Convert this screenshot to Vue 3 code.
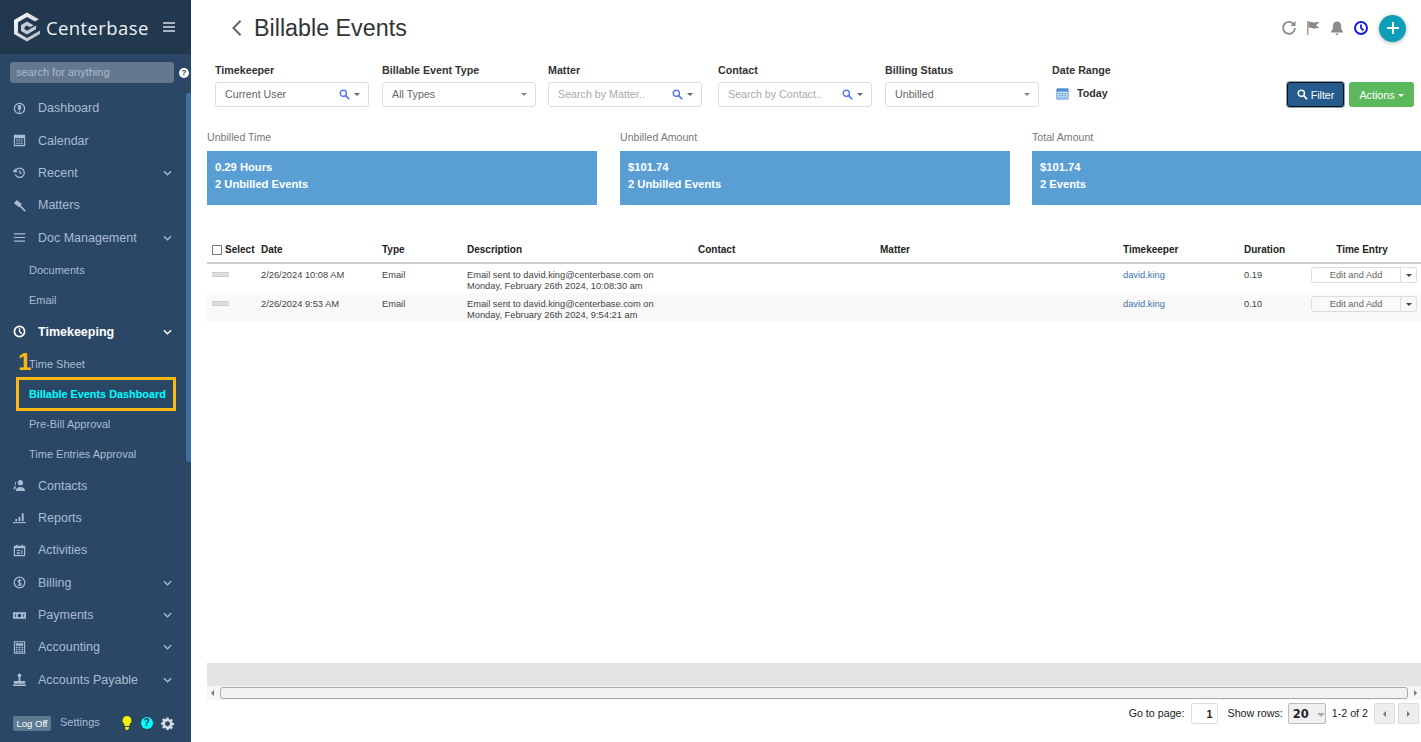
<template>
  <div class="app">
    <aside class="sidebar">
      <div class="brand">
        <svg class="logo" viewBox="2 1 26 30">
          <defs>
            <linearGradient id="hex" x1="0" y1="0" x2="1" y2="1">
              <stop offset="0" stop-color="#ffffff" />
              <stop offset="1" stop-color="#aeb8c2" />
            </linearGradient>
          </defs>
          <path d="M15 1.500 2 9v14l13 7.500L28 23v-3.500l-13 7.500-9-5.200V11.200L15 6l8 4.600 4-2.400z" fill="url(#hex)" />
          <path d="M15 10.500 9 14v6l6 3.500 9-5.200V14.500l-9 5.200-2.500-1.500V16l2.500-1.500 3 1.700 3.500-2z" fill="#c3ccd4" />
        </svg>
        <span class="brand-name">Centerbase</span>
        <svg class="burger" viewBox="0 0 14 12"><path d="M1 2h12M1 6h12M1 10h12" stroke="#d5dde5" stroke-width="1.600" /></svg>
      </div>
      <div class="search-row">
        <div class="search">search for anything</div>
        <span class="search-help">?</span>
      </div>
      <div class="scroll-thumb"></div>
      <nav class="nav">
        <template v-for="item in nav" :key="item.label">
          <div class="nav-item" :class="{ active: item.active }">
            <svg class="nav-icon" viewBox="0 0 14 14" v-html="icons[item.icon]"></svg>
            <span>{{ item.label }}</span>
            <svg v-if="item.arrow" class="chev" viewBox="0 0 10 6"><path d="M1 1l4 4 4-4" fill="none" stroke="currentColor" stroke-width="1.500" /></svg>
          </div>
          <div v-if="item.children" class="sub">
            <div v-for="c in item.children" :key="c.label" class="sub-item" :class="{ current: c.current }">
              <span v-if="c.mark" class="mark">1</span>
              {{ c.label }}
            </div>
          </div>
        </template>
      </nav>
      <div class="side-foot">
        <span class="logoff">Log Off</span>
        <span class="settings">Settings</span>
        <svg class="bulb" viewBox="0 0 10 14"><path d="M5 0a4.500 4.500 0 0 0-2.500 8.200V10h5V8.200A4.500 4.500 0 0 0 5 0zM3 11h4v1.200L5.800 14H4.200L3 12.200z" fill="#f4f000" /></svg>
        <span class="help">?</span>
        <svg class="gear" viewBox="0 0 24 24"><path fill="#d3dbe3" fill-rule="evenodd" d="M10 1h4l.6 3.200 1.900.8 2.700-1.800 2.800 2.800-1.800 2.700.8 1.900L24 11.200v3.600l-3 .6-.8 1.900 1.800 2.700-2.800 2.800-2.700-1.800-1.900.8L14 24h-4l-.6-3.200-1.900-.8-2.700 1.800L2 19l1.800-2.700-.8-1.900L0 13.800v-3.600l3-.6.800-1.900L2 5l2.800-2.800 2.700 1.800 1.900-.8zM12 8a4.500 4.500 0 1 0 0 9 4.500 4.500 0 0 0 0-9z" /></svg>
      </div>
    </aside>

    <main class="main">
      <header class="topbar">
        <svg class="back" viewBox="0 0 12 20"><path d="M10 2 2 10l8 8" fill="none" stroke="#666" stroke-width="2.200" /></svg>
        <h1>Billable Events</h1>
        <div class="top-icons">
          <svg viewBox="0 0 16 16" width="16" height="16"><path d="M13 4.500A6 6 0 1 0 14 8" fill="none" stroke="#8a8a8a" stroke-width="1.800" /><path d="M14.500 1v5h-5z" fill="#8a8a8a" /></svg>
          <svg viewBox="0 0 16 16" width="16" height="16"><path d="M2 1h1.500v14H2z" fill="#b39b86" /><path d="M3.500 1.500c3 0 4 1 5.500 1 1.500 0 3-.5 5.500-.5L11 5.500l3.500 2.500c-2.500 0-4 .5-5.500.5-1.500 0-2.500-1-5.500-1z" fill="#8a8a8a" /></svg>
          <svg viewBox="0 0 16 16" width="16" height="16"><path d="M8 1.500c-2.800 0-4 2-4 4.500 0 3-1 4.500-2 5.500v1h12v-1c-1-1-2-2.500-2-5.500 0-2.500-1.200-4.500-4-4.500zM6.500 13.500h3A1.500 1.500 0 0 1 6.500 13.500z" fill="#8a8a8a" /></svg>
          <svg viewBox="0 0 16 16" width="16" height="16"><circle cx="8" cy="8" r="6" fill="none" stroke="#1a1ae6" stroke-width="2" /><path d="M8 4.500V8l2.500 2.500" fill="none" stroke="#1a1ae6" stroke-width="1.800" /></svg>
          <button class="add">
            <svg viewBox="0 0 16 16" width="16" height="16"><path d="M8 2v12M2 8h12" stroke="#fff" stroke-width="2" /></svg>
          </button>
        </div>
      </header>

      <section class="filters">
        <div v-for="f in filters" :key="f.label" class="filter">
          <label>{{ f.label }}</label>
          <div class="input" :class="{ ph: f.placeholder }">
            <span class="val">{{ f.value }}</span>
            <svg v-if="f.search" class="lens" viewBox="0 0 14 14"><circle cx="5.500" cy="5.500" r="4" fill="none" stroke="#5577ee" stroke-width="1.800" /><path d="M8.500 8.500 13 13" stroke="#5577ee" stroke-width="2" /></svg>
            <i class="caret" :class="{ small: !f.search }"></i>
          </div>
        </div>
        <div class="filter date">
          <label>Date Range</label>
          <div class="today">
            <svg viewBox="0 0 14 14" width="13" height="13"><path d="M1 2h12v11H1z" fill="#cfe3f5" stroke="#4a90d0" /><path d="M1 2h12v3H1z" fill="#4a90d0" /><path d="M3 7h2M6 7h2M9 7h2M3 9h2M6 9h2M9 9h2M3 11h2M6 11h2M9 11h2" stroke="#4a90d0" /></svg>
            <b>Today</b>
          </div>
        </div>
        <div class="filter-btns">
          <button class="btn filter-btn">
            <svg viewBox="0 0 14 14" width="11" height="11"><circle cx="5.500" cy="5.500" r="4" fill="none" stroke="#fff" stroke-width="1.800" /><path d="M8.500 8.500 13 13" stroke="#fff" stroke-width="2" /></svg>
            Filter
          </button>
          <button class="btn actions">Actions <i class="caret white"></i></button>
        </div>
      </section>

      <section class="cards">
        <div v-for="c in cards" :key="c.label" class="card">
          <div class="card-label">{{ c.label }}</div>
          <div class="card-box">
            <div>{{ c.top }}</div>
            <div>{{ c.bottom }}</div>
          </div>
        </div>
      </section>

      <section class="table">
        <div class="row head">
          <div class="sel"><span class="check"></span>Select</div>
          <div>Date</div>
          <div>Type</div>
          <div>Description</div>
          <div>Contact</div>
          <div>Matter</div>
          <div>Timekeeper</div>
          <div>Duration</div>
          <div class="center">Time Entry</div>
        </div>
        <div v-for="r in rows" :key="r.date" class="row body">
          <div class="grip"><span></span></div>
          <div>{{ r.date }}</div>
          <div>Email</div>
          <div class="desc">Email sent to david.king@centerbase.com on<br />{{ r.when }}</div>
          <div></div>
          <div></div>
          <div class="link">david.king</div>
          <div>{{ r.duration }}</div>
          <div class="entry">
            <span class="edit">Edit and Add</span>
            <span class="drop"><i class="caret dark"></i></span>
          </div>
        </div>
      </section>

      <div class="band"></div>
      <div class="hscroll">
        <i class="tri left"></i>
        <div class="track"></div>
        <i class="tri right"></i>
      </div>
      <footer class="pager">
        <span>Go to page:</span>
        <span class="page-input">1</span>
        <span class="rows-label">Show rows:</span>
        <span class="rows-select">20 <i class="caret grey"></i></span>
        <span class="count">1-2 of 2</span>
        <span class="page-btn"><i class="tri left"></i></span>
        <span class="page-btn"><i class="tri right"></i></span>
      </footer>
    </main>
  </div>
</template>

<script setup>
const icons = {
  dash: '<circle cx="7" cy="7" r="5.500" fill="none" stroke="currentColor" stroke-width="1.400"/><path d="M5.500 4h3L8 8H6zM7 9v3" stroke="currentColor" fill="currentColor"/>',
  cal: '<path d="M1.500 1.500h11v11h-11z" fill="none" stroke="currentColor" stroke-width="1.200"/><path d="M1.500 2h11v2.500h-11zM3.500 6h2v1h-2zM6 6h2v1H6zM8.500 6h2v1h-2zM3.500 8h2v1h-2zM6 8h2v1H6zM8.500 8h2v1h-2zM3.500 10h2v1h-2zM6 10h2v1H6zM8.500 10h2v1h-2z" fill="currentColor"/>',
  recent: '<path d="M3 4.500A5 5 0 1 1 2.500 9" fill="none" stroke="currentColor" stroke-width="1.400"/><path d="M0 6.500h4.500L2.200 3zM7 4v3.500l2.500 1" fill="currentColor" stroke="currentColor" stroke-width=".6"/>',
  gavel: '<path d="M4 1 9.500 5.500 6.500 9 1 4.500z" fill="currentColor"/><path d="M7.500 6 13.800 12.300 12.500 13.600 6.200 7.300z" fill="currentColor"/>',
  menu: '<path d="M1 3h12M1 7h12M1 11h12" stroke="currentColor" stroke-width="1.300"/>',
  clock: '<circle cx="7" cy="7" r="5.500" fill="none" stroke="currentColor" stroke-width="1.800"/><path d="M7 3.500V7l2.500 2.500" fill="none" stroke="currentColor" stroke-width="1.500"/>',
  contacts: '<circle cx="8" cy="4" r="2.800" fill="currentColor"/><path d="M3 13c0-3 2-4.500 5-4.500S13 10 13 13z" fill="currentColor"/><path d="M3.500 2.500a2.500 2.500 0 0 0 0 4.500c-2 .6-3 2-3 4h2" fill="currentColor"/>',
  reports: '<path d="M0 12.500h14" stroke="currentColor" stroke-width="1.200"/><path d="M2.500 8.500h2V11h-2zM6 6.500h2V11H6zM9.500 2.500h2V11h-2z" fill="currentColor"/>',
  activities: '<path d="M1.500 2.500h11v10h-11z" fill="none" stroke="currentColor" stroke-width="1.300"/><path d="M1.500 2.500h11v2h-11zM3.500 .8h1.500v2H3.500zM9 .8h1.500v2H9zM4 6.500h3.500v1H4zM4 8.500h3.500v1H4zM4 10h3.500v1H4zM9 6.500h1.200V11H9z" fill="currentColor"/>',
  billing: '<circle cx="7" cy="7" r="5.700" fill="none" stroke="currentColor" stroke-width="1.300"/><path d="M9 5.200C8.500 4.500 5.300 4 5.300 5.700S9 7.300 9 9c0 1.500-3 1.300-4 .5M7 3.300v7.500" fill="none" stroke="currentColor" stroke-width="1.100"/>',
  payments: '<path d="M0 3.500h14v7H0z" fill="currentColor"/><circle cx="7" cy="7" r="2" fill="#2a4766"/><path d="M2 5.500h1v3H2zM11 5.500h1v3h-1z" fill="#2a4766"/>',
  accounting: '<path d="M1.500 .8h11v12.400h-11z" fill="none" stroke="currentColor" stroke-width="1.200"/><path d="M3 2.500h8v2.500H3zM3 6.200h2v1.500H3zM6 6.200h2v1.500H6zM9 6.200h2v1.500H9zM3 8.500h2V10H3zM6 8.500h2V10H6zM9 8.500h2V10H9zM3 10.800h2v1.500H3zM6 10.800h2v1.500H6zM9 10.800h2v1.500H9z" fill="currentColor"/>',
  stamp: '<circle cx="7" cy="2.500" r="2" fill="currentColor"/><path d="M6 4h2v4.500H6zM1 8.500h12v3H1zM0 12.500h14V14H0z" fill="currentColor"/>'
}

const nav = [
  { label: 'Dashboard', icon: 'dash' },
  { label: 'Calendar', icon: 'cal' },
  { label: 'Recent', icon: 'recent', arrow: true },
  { label: 'Matters', icon: 'gavel' },
  {
    label: 'Doc Management',
    icon: 'menu',
    arrow: true,
    children: [{ label: 'Documents' }, { label: 'Email' }]
  },
  {
    label: 'Timekeeping',
    icon: 'clock',
    arrow: true,
    active: true,
    children: [
      { label: 'Time Sheet', mark: true },
      { label: 'Billable Events Dashboard', current: true },
      { label: 'Pre-Bill Approval' },
      { label: 'Time Entries Approval' }
    ]
  },
  { label: 'Contacts', icon: 'contacts' },
  { label: 'Reports', icon: 'reports' },
  { label: 'Activities', icon: 'activities' },
  { label: 'Billing', icon: 'billing', arrow: true },
  { label: 'Payments', icon: 'payments', arrow: true },
  { label: 'Accounting', icon: 'accounting', arrow: true },
  { label: 'Accounts Payable', icon: 'stamp', arrow: true }
]

const filters = [
  { label: 'Timekeeper', value: 'Current User', search: true },
  { label: 'Billable Event Type', value: 'All Types' },
  { label: 'Matter', value: 'Search by Matter..', search: true, placeholder: true },
  { label: 'Contact', value: 'Search by Contact..', search: true, placeholder: true },
  { label: 'Billing Status', value: 'Unbilled' }
]

const cards = [
  { label: 'Unbilled Time', top: '0.29 Hours', bottom: '2 Unbilled Events' },
  { label: 'Unbilled Amount', top: '$101.74', bottom: '2 Unbilled Events' },
  { label: 'Total Amount', top: '$101.74', bottom: '2 Events' }
]

const rows = [
  { date: '2/26/2024 10:08 AM', when: 'Monday, February 26th 2024, 10:08:30 am', duration: '0.19' },
  { date: '2/26/2024 9:53 AM', when: 'Monday, February 26th 2024, 9:54:21 am', duration: '0.10' }
]
</script>

<style>
html, body {
  margin: 0;
  background: #fff;
}
</style>

<style scoped>
.app {
  display: flex;
  width: 1421px;
  height: 742px;
  overflow: hidden;
  font-family: "Liberation Sans", Arial, sans-serif;
  color: #333;
}
.sidebar {
  position: relative;
  flex: 0 0 191px;
  display: flex;
  flex-direction: column;
  background: #2a4766;
  color: #a9bcd2;
}
.brand {
  height: 54px;
  background: #22384f;
  display: flex;
  align-items: center;
  padding-left: 13px;
  box-sizing: border-box;
}
.logo {
  width: 28px;
  height: 30px;
}
.brand-name {
  margin-left: 5px;
  color: #eef1f4;
  font-size: 18.500px;
  letter-spacing: .4px;
  font-family: "Open Sans", "Liberation Sans", sans-serif;
}
.burger {
  width: 14px;
  height: 12px;
  margin-left: 13px;
}
.search-row {
  display: flex;
  align-items: center;
  padding: 8px 0 0 10px;
  height: 21px;
}
.search {
  width: 164px;
  height: 21px;
  line-height: 21px;
  padding-left: 6px;
  box-sizing: border-box;
  border-radius: 3px;
  background: #64798f;
  color: #aebbc8;
  font-size: 11px;
}
.search-help {
  width: 10px;
  height: 10px;
  margin-left: 5px;
  border-radius: 50%;
  background: #fff;
  color: #22384f;
  font-size: 8px;
  font-weight: bold;
  line-height: 10px;
  text-align: center;
}
.scroll-thumb {
  position: absolute;
  left: 186px;
  top: 93px;
  width: 5px;
  height: 369px;
  border-radius: 3px 0 0 3px;
  background: #3f6ea3;
}
.nav {
  margin-top: 9px;
  flex: 1;
}
.nav-item {
  height: 32.400px;
  display: flex;
  align-items: center;
  padding-left: 13px;
  font-size: 12.500px;
}
.nav-item span {
  margin-left: 12px;
}
.nav-item.active {
  color: #fff;
  font-weight: bold;
}
.nav-icon {
  width: 13px;
  height: 13px;
  flex: none;
}
.chev {
  width: 9px;
  height: 6px;
  margin-left: auto;
  margin-right: 19px;
}
.sub {
  padding: 1.500px 0 0;
}
.sub-item {
  position: relative;
  height: 30px;
  line-height: 30px;
  padding-left: 29px;
  font-size: 11px;
}
.sub-item.current {
  margin: 0 17px 0 18px;
  padding-left: 11px;
  outline: 3px solid #fdb813;
  outline-offset: -1px;
  color: #0ff;
  font-weight: bold;
  font-size: 10.850px;
  white-space: nowrap;
}
.mark {
  position: absolute;
  left: 18px;
  top: 1px;
  color: #fdb813;
  font-size: 24px;
  font-weight: bold;
  line-height: 24px;
}
.side-foot {
  height: 37px;
  display: flex;
  align-items: center;
  padding: 0 0 1px 13px;
  box-sizing: border-box;
}
.logoff {
  width: 38px;
  height: 15px;
  line-height: 15px;
  text-align: center;
  border-radius: 2px;
  background: #5d7a93;
  color: #fff;
  font-size: 9.500px;
}
.settings {
  margin-left: 9px;
  margin-bottom: 2px;
  font-size: 11px;
}
.bulb {
  width: 10px;
  height: 14px;
  margin-left: 22px;
}
.help {
  width: 12px;
  height: 12px;
  margin-left: 9px;
  border-radius: 50%;
  background: #0ff;
  color: #22384f;
  font-size: 10px;
  font-weight: bold;
  line-height: 12px;
  text-align: center;
}
.gear {
  width: 13px;
  height: 13px;
  margin-left: 8px;
}
.main {
  flex: 1;
  min-width: 0;
  display: flex;
  flex-direction: column;
  padding-left: 16px;
}
.topbar {
  height: 56px;
  display: flex;
  align-items: center;
  padding: 0 15px 0 24px;
  box-sizing: border-box;
}
.back {
  width: 12px;
  height: 18px;
}
h1 {
  margin: 0 0 0 11px;
  color: #333;
  font-size: 23.300px;
  font-weight: normal;
}
.top-icons {
  margin-left: auto;
  display: flex;
  align-items: center;
  gap: 8px;
}
.add {
  width: 27px;
  height: 27px;
  padding: 0;
  margin-left: 2px;
  border: 0;
  border-radius: 50%;
  background: #0d9fb8;
  box-shadow: 0 1px 4px rgba(0, 0, 0, .3);
  display: flex;
  align-items: center;
  justify-content: center;
}
.filters {
  display: grid;
  grid-template-columns: 167px 166px 170px 167px 167px 1fr auto;
  padding: 8px 7px 0 8px;
  height: 43px;
  align-items: start;
}
.filter label {
  display: block;
  height: 18px;
  line-height: 13px;
  color: #333;
  font-size: 10.700px;
  font-weight: bold;
}
.input {
  width: 154px;
  height: 25px;
  display: flex;
  align-items: center;
  box-sizing: border-box;
  padding: 0 8px 1px 9px;
  border: 1.500px solid #ddd;
  border-radius: 3px;
  color: #666;
  font-size: 10.700px;
}
.input.ph {
  color: #aaa;
}
.val {
  flex: 1;
  white-space: nowrap;
}
.lens {
  width: 11px;
  height: 11px;
  margin-right: 4px;
}
.caret {
  display: inline-block;
  width: 0;
  height: 0;
  border: 3.500px solid transparent;
  border-bottom: 0;
  border-top-color: #666;
}
.caret.small {
  border-width: 3.500px 3px 0;
  border-top-color: #888;
}
.caret.white {
  border-width: 3px 3px 0;
  border-top-color: #fff;
  vertical-align: middle;
}
.caret.dark {
  border-width: 3px 3px 0;
  border-top-color: #444;
}
.caret.grey {
  border-width: 4px 4px 0;
  border-top-color: #aaa;
  margin-left: 4px;
  vertical-align: middle;
}
.today {
  display: flex;
  align-items: center;
  gap: 8px;
  padding-left: 4px;
  margin-top: -1px;
  height: 24px;
  font-size: 10.700px;
}
.filter-btns {
  display: flex;
  gap: 5px;
  padding-top: 18px;
}
.btn {
  height: 25px;
  padding: 0;
  border-radius: 3px;
  color: #fff;
  font: 10.700px "Liberation Sans", Arial, sans-serif;
}
.filter-btn {
  width: 57px;
  background: #245a8c;
  border: 1.500px solid #111;
  box-shadow: 0 0 0 1px #8aa0b5;
  display: flex;
  align-items: center;
  justify-content: center;
  gap: 3px;
}
.actions {
  width: 65px;
  border: 0;
  background: #5cb85c;
}
.cards {
  display: grid;
  grid-template-columns: 390px 390px 1fr;
  column-gap: 23px;
  margin-top: 24px;
}
.cards .card:last-child {
  margin-left: -1px;
}
.card-label {
  height: 20px;
  line-height: 13px;
  color: #777;
  font-size: 10.600px;
}
.card-box {
  height: 54px;
  padding: 8px 8px 0;
  box-sizing: border-box;
  background: #5a9fd4;
  color: #fff;
  font-size: 11.200px;
  font-weight: bold;
  line-height: 17px;
}
.table {
  margin-top: 33px;
  flex: 1;
}
.row {
  display: grid;
  grid-template-columns: 54px 121px 85px 231px 182px 243px 121px 67px 1fr;
}
.head {
  height: 24px;
  line-height: 24px;
  border-bottom: 2px solid #ccc;
  color: #222;
  font-size: 10px;
  font-weight: bold;
}
.sel {
  display: flex;
  align-items: center;
  height: 24px;
  padding-left: 5px;
}
.check {
  width: 8px;
  height: 8px;
  margin-right: 3px;
  border: 1px solid #777;
}
.center {
  text-align: center;
  padding-right: 8px;
}
.body {
  height: 29px;
  padding-top: 5.500px;
  box-sizing: border-box;
  color: #444;
  font-size: 9.300px;
  line-height: 11.500px;
}
.body:nth-child(odd) {
  background: #f9f9f9;
}
.grip {
  padding: 2.500px 0 0 5px;
}
.grip span {
  display: block;
  width: 17px;
  height: 3px;
  border-top: 1px solid #ccc;
  border-bottom: 1px solid #ccc;
  background: #ddd;
}
.desc {
  white-space: nowrap;
}
.link {
  color: #3b73af;
}
.entry {
  display: flex;
  height: 16px;
  margin-top: -2.500px;
  width: 106px;
}
.edit {
  width: 89px;
  line-height: 14px;
  text-align: center;
  border: 1px solid #ddd;
  border-radius: 3px 0 0 3px;
  color: #666;
}
.drop {
  width: 15px;
  display: flex;
  align-items: center;
  justify-content: center;
  border: 1px solid #ddd;
  border-left: 0;
  border-radius: 0 3px 3px 0;
}
.band {
  height: 23px;
  background: #e4e4e4;
}
.hscroll {
  height: 14px;
  display: flex;
  align-items: center;
  justify-content: space-between;
  padding: 0 4px;
  background: #f6f6f6;
}
.track {
  flex: 1;
  height: 10px;
  margin: 0 6px;
  border: 1px solid #aaa;
  border-radius: 3px;
  background: #f2f2f2;
}
.tri {
  display: inline-block;
  width: 0;
  height: 0;
  border: 3.500px solid transparent;
}
.tri.left {
  border-left: 0;
  border-right-color: #777;
}
.tri.right {
  border-right: 0;
  border-left-color: #777;
}
.pager {
  height: 42px;
  display: flex;
  align-items: flex-start;
  justify-content: flex-end;
  padding: 3px 2px 0 0;
  box-sizing: border-box;
  color: #222;
  font-size: 10.700px;
  line-height: 20px;
}
.page-input {
  width: 27px;
  height: 21px;
  margin-left: 6px;
  padding-right: 4px;
  box-sizing: border-box;
  border: 1px solid #ddd;
  border-radius: 2px;
  text-align: right;
  font-weight: bold;
}
.rows-label {
  margin-left: 10px;
}
.rows-select {
  width: 38px;
  height: 21px;
  margin-left: 5px;
  box-sizing: border-box;
  padding-left: 4px;
  border: 1px solid #bbb;
  border-radius: 2px;
  background: #f0f0f0;
  font: bold 11.500px/20px "DejaVu Sans", sans-serif;
}
.count {
  margin-left: 6px;
}
.page-btn {
  width: 21px;
  height: 21px;
  margin-left: 3px;
  display: flex;
  align-items: center;
  justify-content: center;
  box-sizing: border-box;
  border: 1px solid #ddd;
  border-radius: 2px;
  background: #eee;
}
.count + .page-btn {
  margin-left: 6px;
}
</style>
